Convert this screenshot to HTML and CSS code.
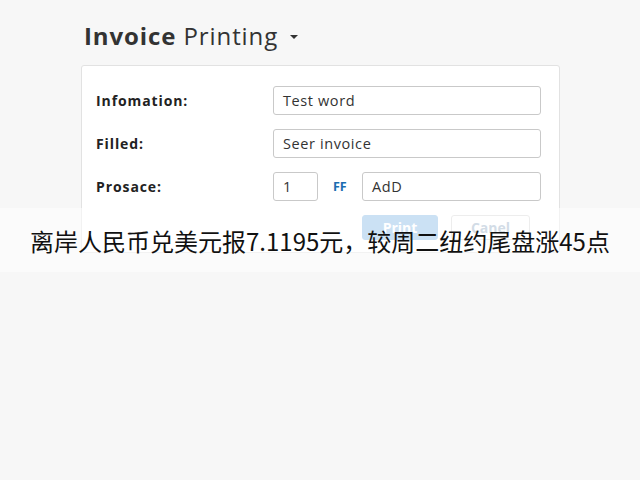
FILE: index.html
```html
<!DOCTYPE html>
<html>
<head>
<meta charset="utf-8">
<link rel="stylesheet" href="styles.css">
</head>
<body>
<div class="page">
  <h1 class="title"><b>Invoice</b> Printing <span class="caret"></span></h1>
  <div class="card">
    <div class="row">
      <label class="label">Infomation:</label>
      <div class="field">Test word</div>
    </div>
    <div class="row">
      <label class="label">Filled:</label>
      <div class="field">Seer invoice</div>
    </div>
    <div class="row">
      <label class="label">Prosace:</label>
      <div class="combo">
        <div class="field small">1</div>
        <span class="ff">FF</span>
        <div class="field grow">AdD</div>
      </div>
    </div>
    <div class="actions">
      <button class="btn primary">Print</button>
      <button class="btn">Canel</button>
    </div>
  </div>
</div>
<div class="banner">离岸人民币兑美元报7.1195元，较周二纽约尾盘涨45点</div>
</body>
</html>
```
FILE: styles.css
```css
html, body {
  margin: 0;
  padding: 0;
  background: #f7f7f7;
  font-family: "Open Sans", "Noto Sans", sans-serif;
  width: 640px;
  height: 480px;
  overflow: hidden;
}
.page {
  padding: 0 0 0 81px;
}
.title {
  margin: 0;
  padding: 21px 0 0 3px;
  height: 45px;
  box-sizing: border-box;
  font-size: 24px;
  letter-spacing: 0.9px;
  line-height: 30px;
  font-weight: 400;
  color: #333;
}
.title b {
  font-weight: 700;
}
.caret {
  display: inline-block;
  width: 0;
  height: 0;
  border-left: 4px solid transparent;
  border-right: 4px solid transparent;
  border-top: 4px solid #333;
  vertical-align: middle;
  margin-left: 5px;
  margin-top: -3px;
}
.card {
  margin-top: 20px;
  width: 479px;
  box-sizing: border-box;
  background: #fff;
  border: 1px solid #e2e2e2;
  border-radius: 3px;
  padding: 20px 18px 12px 14px;
  display: flex;
  flex-direction: column;
  gap: 14px;
}
.row {
  display: grid;
  grid-template-columns: 177px 1fr;
  align-items: center;
  height: 29px;
}
.label {
  font-size: 14px;
  letter-spacing: 0.9px;
  font-weight: 700;
  color: #222;
}
.field {
  height: 29px;
  box-sizing: border-box;
  border: 1px solid #c9c9c9;
  border-radius: 3px;
  padding: 0 9px;
  font-size: 14.5px;
  letter-spacing: 0.6px;
  line-height: 27px;
  color: #333;
  background: #fff;
}
.combo {
  display: flex;
  align-items: center;
}
.small {
  width: 45px;
  margin-right: 15px;
}
.ff {
  font-size: 12.5px;
  font-weight: 700;
  color: #1a6db0;
  width: 29px;
}
.grow {
  flex: 1;
}
.actions {
  display: flex;
  gap: 13px;
  padding-left: 266px;
}
.btn {
  height: 25px;
  width: 79px;
  border: 1px solid #d8d8d8;
  border-radius: 3px;
  background: #fff;
  font-family: "Open Sans", sans-serif;
  font-size: 14px;
  font-weight: 700;
  color: #9cb2c8;
  padding: 0;
}
.btn.primary {
  width: 76px;
  background: #8dbde6;
  border-color: #8dbde6;
  color: #fff;
}
.banner {
  position: absolute;
  left: 0;
  top: 208px;
  width: 640px;
  height: 64px;
  background: rgba(255, 255, 255, 0.55);
  font-family: "Noto Sans CJK SC", sans-serif;
  font-size: 24px;
  line-height: 66px;
  color: #111;
  text-align: center;
}
```
